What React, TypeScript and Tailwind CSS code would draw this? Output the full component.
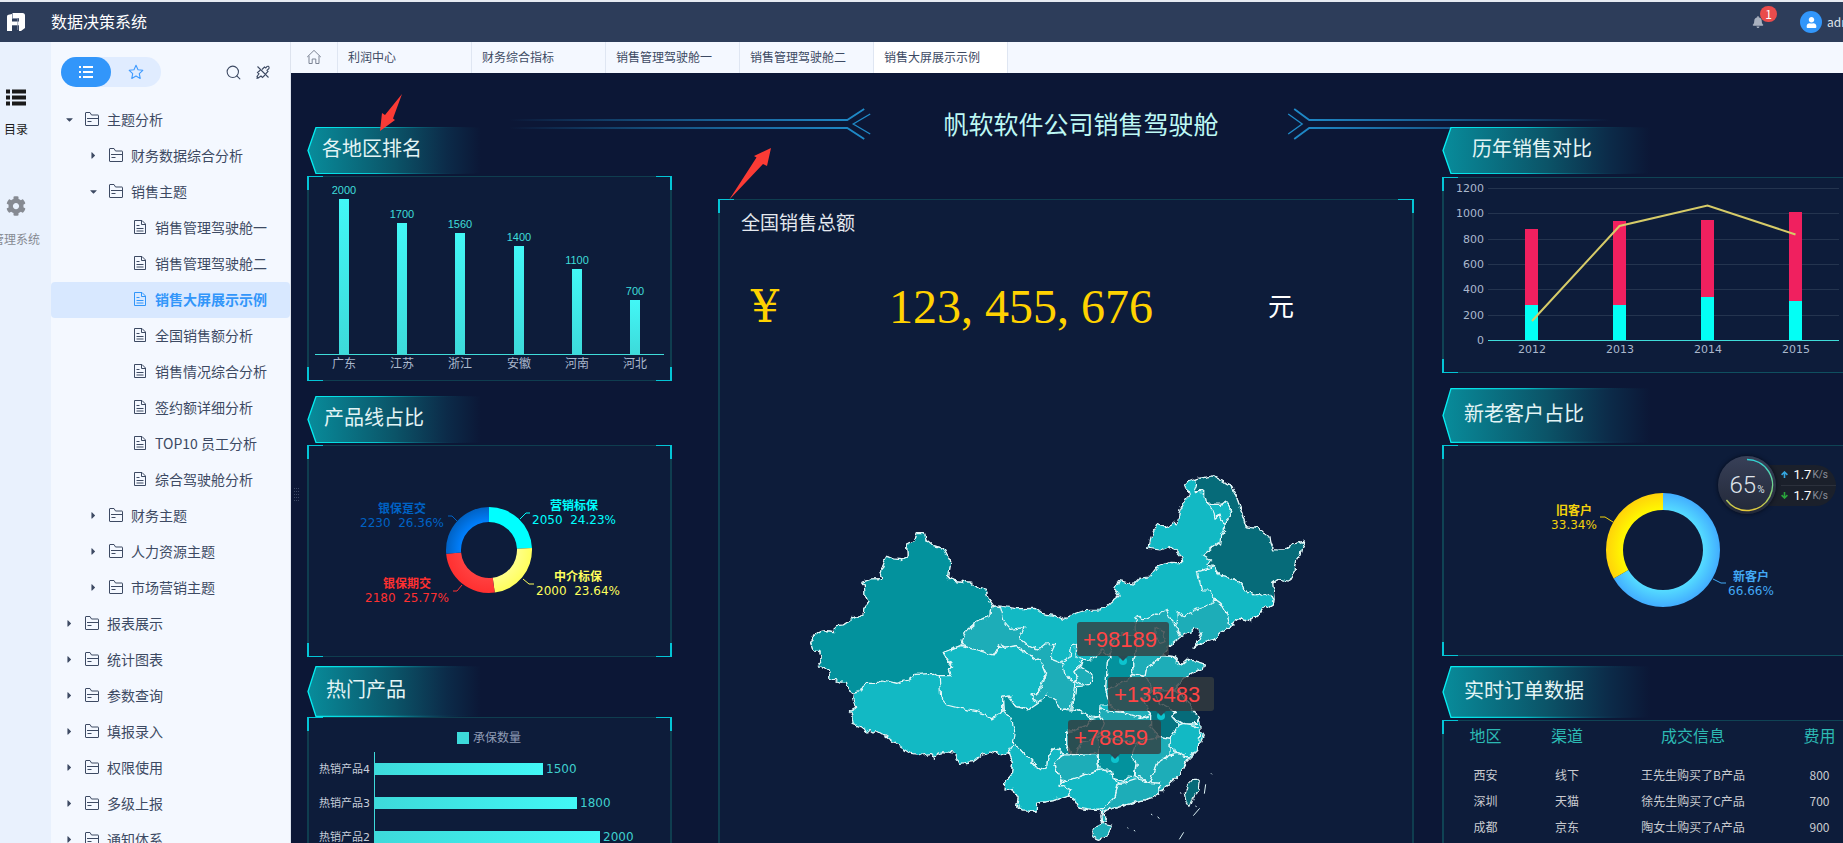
import type { ReactNode } from "react";
import { Search } from "lucide-react";
import { FaBell, FaCaretDown, FaCaretRight, FaCog, FaUser } from "react-icons/fa";

type TreeItem = {
  label: string;
  level: 0 | 1 | 2;
  open?: boolean;
  active?: boolean;
};

const tree: TreeItem[] = [
  { label: "主题分析", level: 0, open: true },
  { label: "财务数据综合分析", level: 1 },
  { label: "销售主题", level: 1, open: true },
  { label: "销售管理驾驶舱一", level: 2 },
  { label: "销售管理驾驶舱二", level: 2 },
  { label: "销售大屏展示示例", level: 2, active: true },
  { label: "全国销售额分析", level: 2 },
  { label: "销售情况综合分析", level: 2 },
  { label: "签约额详细分析", level: 2 },
  { label: "TOP10 员工分析", level: 2 },
  { label: "综合驾驶舱分析", level: 2 },
  { label: "财务主题", level: 1 },
  { label: "人力资源主题", level: 1 },
  { label: "市场营销主题", level: 1 },
  { label: "报表展示", level: 0 },
  { label: "统计图表", level: 0 },
  { label: "参数查询", level: 0 },
  { label: "填报录入", level: 0 },
  { label: "权限使用", level: 0 },
  { label: "多级上报", level: 0 },
  { label: "通知体系", level: 0 },
];

const tabs = ["利润中心", "财务综合指标", "销售管理驾驶舱一", "销售管理驾驶舱二", "销售大屏展示示例"];

const orders = [
  ["西安", "线下", "王先生购买了B产品", "800"],
  ["深圳", "天猫", "徐先生购买了C产品", "700"],
  ["成都", "京东", "陶女士购买了A产品", "900"],
];

const levelPadding = {
  0: "pl-[11px]",
  1: "pl-[35px]",
  2: "pl-[60px]",
};

/* ---------- icons ---------- */

function FolderIcon() {
  return (
    <svg width="16" height="16" viewBox="0 0 16 16" fill="none" stroke="currentColor" strokeWidth="1">
      <path d="M1.500 14V2a.5.5 0 0 1 .5-.5h4l1.500 2.500H14a.5.500 0 0 1 .5.500V14a.5.500 0 0 1-.5.500H2a.5.500 0 0 1-.5-.500" />
      <path d="M3 7.500h11.500M3.500 10.500h4" />
    </svg>
  );
}

function FileIcon() {
  return (
    <svg width="14" height="16" viewBox="0 0 14 16" fill="none" stroke="currentColor" strokeWidth="1">
      <path d="M1.500 1.500h7.500l3.500 3.500v9.500h-11zM8.500 1.500v4h4" />
      <path d="M3.500 6.500h3M3.500 9.500h7M3.500 12h7" />
    </svg>
  );
}

function HomeIcon() {
  return (
    <svg width="16" height="16" viewBox="0 0 16 16" fill="none" stroke="currentColor" strokeWidth="1">
      <path d="M1.200 8 8 1.400 14.800 8M3 6.800v7.700h3.200V10h3.600v4.500H13V6.800" />
    </svg>
  );
}

function UnpinIcon() {
  return (
    <svg width="16" height="16" viewBox="0 0 16 16" fill="none" stroke="currentColor" strokeWidth="1.100">
      <path d="M2.500 2.500 13.500 13.500" />
      <path d="M7 5.500 9.500 3l1.300 1 1.200-1.500q1.500-.8 2 .5.500 1.200-.5 2L12 6.300l1 1.200L10.500 10" />
      <path d="M5.500 6 2.500 8.500l1.500 1.300L2 12.500 3.200 14l2.800-2 1.500 1.500L10 11M1.500 14.500 3.200 13" />
    </svg>
  );
}

function ListIcon({ bold = false }: { bold?: boolean }) {
  if (bold) {
    return (
      <svg width="20" height="17" viewBox="0 0 20 17" fill="currentColor">
        <path d="M0 .5h4v4H0zM6 .5h14v4H6zM0 6.500h4v4H0zM6 6.500h14v4H6zM0 12.500h4v4H0zM6 12.500h14v4H6z" />
      </svg>
    );
  }
  return (
    <svg width="16" height="14" viewBox="0 0 16 14" fill="currentColor">
      <path d="M1 1h2v2H1zM5 1h10v2H5zM1 6h2v2H1zM5 6h10v2H5zM1 11h2v2H1zM5 11h10v2H5z" />
    </svg>
  );
}

function StarIcon() {
  return (
    <svg width="16" height="16" viewBox="0 0 16 16" fill="none" stroke="currentColor" strokeWidth="1.100" strokeLinejoin="round">
      <path d="M8 1.300 10 5.700l4.800.6-3.500 3.300.9 4.800L8 12.100l-4.200 2.300.9-4.800L1.200 6.300 6 5.700z" />
    </svg>
  );
}

function Logo() {
  return (
    <svg width="18" height="18" viewBox="0 0 18 18">
      <path d="M0 3.500Q0 2 1.500 1.700L5 1V18H0z" fill="#fff" />
      <path d="M5.500 0H15.500Q18 0 18 2.500V15l-4 3h-2V5.200H5.500z" fill="#fff" />
      <path d="M4 8.500h8.500v3.800H4z" fill="#fff" />
      <path d="M5.500 1v4.500h5.200V17" fill="none" stroke="#8b97ab" strokeWidth="0.800" />
    </svg>
  );
}

/* ---------- frame pieces ---------- */

function TopBar() {
  return (
    <header className="flex h-[42px] shrink-0 items-center border-t-2 border-[#e6ebf2] bg-[#2d3d5a] pl-[7px] text-white">
      <Logo />
      <h1 className="ml-[26px] pb-[2px] text-base">数据决策系统</h1>
      <div className="ml-auto flex w-[91px] shrink-0 items-center overflow-visible whitespace-nowrap">
        <button type="button" aria-label="消息" className="relative text-[#a9b1bf]">
          <FaBell size={12} />
          <span className="absolute -top-[10px] left-2 flex h-4 w-[17px] items-center justify-center rounded-full bg-[#ea4c4c] text-xs text-white">
            1
          </span>
        </button>
        <span className="ml-9 flex h-[22px] w-[22px] shrink-0 items-center justify-center rounded-full bg-[#3296fa]">
          <FaUser size={11} />
        </span>
        <span className="ml-[5px] text-xs text-[#dfe4ec]">admin</span>
      </div>
    </header>
  );
}

function Rail() {
  return (
    <nav className="w-[51px] shrink-0 bg-[#e9f1fd]">
      <div className="flex w-8 flex-col items-center whitespace-nowrap text-xs">
        <a href="#catalog" className="mt-[47px] flex flex-col items-center gap-[15px] text-[#1a1a1a]">
          <ListIcon bold />
          目录
        </a>
        <a href="#system" className="mt-[59px] flex w-8 flex-col items-center gap-[15px] text-[#868a92]">
          <FaCog size={20} />
          <span>管理系统</span>
        </a>
      </div>
    </nav>
  );
}

function TreeRow({ item }: { item: TreeItem }) {
  return (
    <li>
      <a
        href="#entry"
        className={`flex h-9 items-center rounded-sm pb-[2px] text-sm ${levelPadding[item.level]} ${
          item.active ? "bg-[#d8e8ff] font-bold text-[#3296fa]" : "text-[#3d4a63]"
        }`}
      >
        {item.level < 2 ? (
          <span className="flex w-[22px] items-center pl-[2px] text-[11px]">
            {item.open ? <FaCaretDown /> : <FaCaretRight />}
          </span>
        ) : (
          <span className="w-[22px]" />
        )}
        {item.level < 2 ? <FolderIcon /> : <FileIcon />}
        <span className={item.level < 2 ? "ml-[7px]" : "ml-2"}>{item.label}</span>
      </a>
    </li>
  );
}

function Sidebar() {
  return (
    <aside className="w-60 shrink-0 overflow-hidden border-r border-[#dde3ee] bg-[#f4f8ff]">
      <div className="flex h-[60px] items-center pl-[10px] pr-[19px]">
        <div className="flex h-[30px] w-[100px] rounded-full bg-[#e0ecff]">
          <button type="button" aria-label="目录" className="flex w-[50px] items-center justify-center rounded-full bg-[#3296fa] text-white">
            <ListIcon />
          </button>
          <button type="button" aria-label="收藏" className="flex w-[50px] items-center justify-center text-[#3f9bff]">
            <StarIcon />
          </button>
        </div>
        <button type="button" aria-label="搜索" className="ml-auto text-[#3d4a63]">
          <Search size={17} strokeWidth={1.500} />
        </button>
        <button type="button" aria-label="取消固定" className="ml-[13px] text-[#3d4a63]">
          <UnpinIcon />
        </button>
      </div>
      <ul>
        {tree.map((item) => (
          <TreeRow key={item.label} item={item} />
        ))}
      </ul>
    </aside>
  );
}

function TabBar() {
  return (
    <nav className="flex h-[31px] shrink-0 bg-[#f4f8ff] text-xs text-[#3d4a63]">
      <a href="#home" aria-label="首页" className="flex w-[47px] items-center justify-center border-r border-[#dfe6f2] pb-px text-[#7c8494]">
        <HomeIcon />
      </a>
      {tabs.map((tab, index) => (
        <a
          key={tab}
          href="#tab"
          className={`flex w-[134px] items-center whitespace-nowrap border-r border-[#dfe6f2] pb-[2px] pl-[10px] ${
            index === tabs.length - 1 ? "bg-white" : ""
          }`}
        >
          {tab}
        </a>
      ))}
    </nav>
  );
}

type BannerProps = { id: string; className: string; wide?: boolean; children: ReactNode };

function Banner({ id, className, wide = false, children }: BannerProps) {
  const width = wide ? 208 : 174;
  return (
    <div className={`relative flex shrink-0 items-center ${className}`}>
      <svg className="absolute inset-0 h-full" width={width} viewBox={`0 0 ${width} 50`} preserveAspectRatio="none">
        <defs>
          <linearGradient id={`${id}-fill`}>
            <stop offset="0" stopColor="#088c9b" />
            <stop offset="0.5" stopColor="#0b5468" />
            <stop offset="0.8" stopColor="#0c2b49" />
            <stop offset="1" stopColor="#0c1736" />
          </linearGradient>
          <linearGradient id={`${id}-line`} gradientUnits="userSpaceOnUse" x1="0" x2={width}>
            <stop offset="0" stopColor="#05f0f5" />
            <stop offset="0.4" stopColor="#06c3cc" />
            <stop offset="1" stopColor="#0c1736" stopOpacity="0" />
          </linearGradient>
        </defs>
        <path d={`M1 25 9 .5H${width}V49.500H9Z`} fill={`url(#${id}-fill)`} />
        <path
          d={`M${width} .5H9L1 25 9 49.500H${width}`}
          fill="none"
          stroke={`url(#${id}-line)`}
          strokeWidth="1.300"
        />
      </svg>
      <h2 className="relative pb-[5px] text-xl leading-6 text-[#e3f4f5]">{children}</h2>
    </div>
  );
}

type PanelProps = { className?: string; open?: boolean; children: ReactNode };

/* `open` panels run off the right edge, so they have no right-hand side */
function Panel({ className = "", open = false, children }: PanelProps) {
  const edge = open
    ? "shadow-[inset_2px_1px_0_#0f4354,inset_0_-1px_0_#0f4f5f]"
    : "shadow-[inset_2px_1px_0_#0f3d4f,inset_-2px_-1px_0_#0f3d4f]";
  return (
    <div className={`relative overflow-hidden bg-[#0d1c3a] ${edge} ${className}`}>
      {children}
      <span className="absolute left-0 top-0 h-[14px] w-4 border-l-2 border-t border-[#04c5d6]" />
      <span className="absolute bottom-0 left-0 h-[14px] w-4 border-b border-l-2 border-[#04c5d6]" />
      {!open && (
        <>
          <span className="absolute right-0 top-0 h-[14px] w-4 border-r-2 border-t border-[#04c5d6]" />
          <span className="absolute bottom-0 right-0 h-[14px] w-4 border-b border-r-2 border-[#04c5d6]" />
        </>
      )}
    </div>
  );
}

/* ---------- charts ---------- */

const chartFont = "[font-family:'DejaVu_Sans','Noto_Sans_CJK_SC',sans-serif]";

function RegionChart() {
  const bars = [
    { name: "广东", value: 2000, x: 37, top: 23 },
    { name: "江苏", value: 1700, x: 95, top: 47 },
    { name: "浙江", value: 1560, x: 153, top: 57 },
    { name: "安徽", value: 1400, x: 212, top: 70 },
    { name: "河南", value: 1100, x: 270, top: 93 },
    { name: "河北", value: 700, x: 328, top: 124 },
  ];
  return (
    <svg className="block w-full" viewBox="0 0 365 205" textAnchor="middle">
      <defs>
        <linearGradient id="bar-v" x1="0" x2="0" y1="0" y2="1">
          <stop offset="0" stopColor="#42f7f6" />
          <stop offset="1" stopColor="#3ddada" />
        </linearGradient>
      </defs>
      {bars.map((bar) => (
        <g key={bar.name}>
          <rect x={bar.x - 5} y={bar.top} width="10" height={178 - bar.top} fill="url(#bar-v)" />
          <text x={bar.x} y={bar.top - 5} fontSize="11" fill="#3fdcd9" fontFamily="Liberation Sans">
            {bar.value}
          </text>
          <text x={bar.x} y="192" fontSize="12" fill="#aab8cd">
            {bar.name}
          </text>
        </g>
      ))}
      <path d="M8 178.500H357" stroke="#3fdcd9" />
    </svg>
  );
}

function slice(cx: number, cy: number, outer: number, inner: number, from: number, to: number) {
  const at = (r: number, t: number) => {
    const a = t * 2 * Math.PI;
    return `${(cx + r * Math.sin(a)).toFixed(2)} ${(cy - r * Math.cos(a)).toFixed(2)}`;
  };
  const large = to - from > 0.5 ? 1 : 0;
  return `M${at(outer, from)}A${outer} ${outer} 0 ${large} 1 ${at(outer, to)}L${at(inner, to)}A${inner} ${inner} 0 ${large} 0 ${at(inner, from)}Z`;
}

function ProductLineChart() {
  const parts = [
    { name: "营销标保", value: "2050\u00a0\u00a024.23%", color: "#00ffff", inner: "#00ffff", from: 0, to: 0.2423, x: 267, y: 65, lead: "M213 74l6-6h4" },
    { name: "中介标保", value: "2000\u00a0\u00a023.64%", color: "#ffff5c", inner: "#ffff8a", from: 0.2423, to: 0.4787, x: 271, y: 136, lead: "M216 134l6 5h5" },
    { name: "银保期交", value: "2180\u00a0\u00a025.77%", color: "#ff3030", inner: "#ff4040", from: 0.4787, to: 0.7364, x: 100, y: 143, lead: "M155 140l-5 6h-4" },
    { name: "银保趸交", value: "2230\u00a0\u00a026.36%", color: "#0062c4", inner: "#0080ff", from: 0.7364, to: 1, x: 95, y: 68, lead: "M150 76l-5-5h-4" },
  ];
  return (
    <svg className={`block w-full ${chartFont}`} viewBox="0 0 365 212" textAnchor="middle" fontSize="12">
      {parts.map((part, i) => (
        <g key={part.name} fill={part.color}>
          <radialGradient id={`line-${i}`} gradientUnits="userSpaceOnUse" cx="182" cy="105" r="43">
            <stop offset="0.650" stopColor={part.inner} />
            <stop offset="1" stopColor={part.color} />
          </radialGradient>
          <path d={slice(182, 105, 43, 28, part.from, part.to)} fill={`url(#line-${i})`} />
          <path d={part.lead} fill="none" stroke={part.color} />
          <text x={part.x} y={part.y} fontWeight="bold">
            {part.name}
          </text>
          <text x={part.x} y={part.y + 14}>
            {part.value}
          </text>
        </g>
      ))}
    </svg>
  );
}

function HotProductChart() {
  const bars = [
    { name: "热销产品4", value: 1500, y: 46, width: 168 },
    { name: "热销产品3", value: 1800, y: 80, width: 202 },
    { name: "热销产品2", value: 2000, y: 114, width: 225 },
  ];
  return (
    <svg className={`block w-full ${chartFont}`} viewBox="0 0 365 160" fontSize="12">
      <defs>
        <linearGradient id="bar-h">
          <stop offset="0" stopColor="#3ddada" />
          <stop offset="1" stopColor="#42f7f6" />
        </linearGradient>
      </defs>
      <rect x="150" y="15" width="12" height="12" fill="#3ddada" />
      <text x="166" y="25" fill="#8f9bb5">
        承保数量
      </text>
      {bars.map((bar) => (
        <g key={bar.name}>
          <text x="63" y={bar.y + 10} textAnchor="end" fontSize="11" fill="#c6cedb">
            {bar.name}
          </text>
          <rect x="68" y={bar.y} width={bar.width} height="12" fill="url(#bar-h)" />
          <text x={bar.width + 71} y={bar.y + 10} fill="#3fcfce">
            {bar.value}
          </text>
        </g>
      ))}
      <path d="M67.500 35V160" stroke="#3ddada" />
    </svg>
  );
}

function YearChart() {
  const years = [
    { year: 2012, x: 90, top: 52, split: 128 },
    { year: 2013, x: 178, top: 44, split: 128 },
    { year: 2014, x: 266, top: 43, split: 120 },
    { year: 2015, x: 354, top: 35, split: 124 },
  ];
  const ticks = [1200, 1000, 800, 600, 400, 200, 0];
  return (
    <svg className={`block w-full ${chartFont}`} viewBox="0 0 401 196" fontSize="11" fill="#aab8cd">
      {ticks.map((tick) => {
        const y = 163.5 - Math.round((tick / 1200) * 152);
        return (
          <g key={tick}>
            <text x="42" y={y + 3.5} textAnchor="end">
              {tick}
            </text>
            <path d={`M46 ${y}H397`} stroke={tick === 0 ? "#3fdcd9" : "#24344f"} />
          </g>
        );
      })}
      {years.map((item) => (
        <g key={item.year}>
          <rect x={item.x - 7} y={item.top} width="13" height={item.split - item.top} fill="#f0205f" />
          <rect x={item.x - 7} y={item.split} width="13" height={163 - item.split} fill="#03fff5" />
          <text x={item.x} y="176" textAnchor="middle">
            {item.year}
          </text>
        </g>
      ))}
      <path d="M90 144 177.500 49 265.500 28.500 353.500 57.500" fill="none" stroke="#d6cb68" strokeWidth="2" />
    </svg>
  );
}

function CustomerChart() {
  return (
    <svg className={`block w-full ${chartFont}`} viewBox="0 0 401 211" textAnchor="middle" fontSize="12">
      <defs>
        <radialGradient id="new-customer" gradientUnits="userSpaceOnUse" cx="221" cy="105" r="57">
          <stop offset="0.700" stopColor="#55dcff" />
          <stop offset="1" stopColor="#42adff" />
        </radialGradient>
        <radialGradient id="old-customer" gradientUnits="userSpaceOnUse" cx="221" cy="105" r="57">
          <stop offset="0.700" stopColor="#fff900" />
          <stop offset="1" stopColor="#ffd20a" />
        </radialGradient>
      </defs>
      <path d={slice(221, 105, 57, 40, 0, 0.6666)} fill="url(#new-customer)" />
      <path d={slice(221, 105, 57, 40, 0.6666, 1)} fill="url(#old-customer)" />
      <g fill="#f2d20c">
        <path d="M171 77l-8-5h-5" fill="none" stroke="#f2d20c" />
        <text x="132" y="70" fontWeight="bold">旧客户</text>
        <text x="132" y="84">33.34%</text>
      </g>
      <g fill="#43a9f5">
        <path d="M271 134l8 4h5" fill="none" stroke="#43a9f5" />
        <text x="309" y="136" fontWeight="bold">新客户</text>
        <text x="309" y="150">66.66%</text>
      </g>
    </svg>
  );
}

function OrderTable() {
  return (
    <table className="w-[416px] table-fixed text-center text-xs text-[#c9cbd0]">
      <colgroup>
        <col className="w-[87px]" />
        <col className="w-[76px]" />
        <col className="w-[176px]" />
        <col className="w-[77px]" />
      </colgroup>
      <thead>
        <tr className="h-[30px] text-base text-[#2cb9b3]">
          <th className="font-normal">地区</th>
          <th className="font-normal">渠道</th>
          <th className="font-normal">成交信息</th>
          <th className="font-normal">费用</th>
        </tr>
        <tr className="h-3" />
      </thead>
      <tbody>
        {orders.map((row) => (
          <tr key={row[0]} className="h-[26px]">
            {row.map((cell) => (
              <td key={cell}>{cell}</td>
            ))}
          </tr>
        ))}
      </tbody>
    </table>
  );
}

/* ---------- map ---------- */

const mainland =
  "M32 545 40 530 62 515 80 512 100 515 110 497 130 495 160 475 190 462 192 445 205 425 195 405 193 375 186 367 215 357 247 356 240 340 250 315 260 289 280 297 305 299 322 290 320 252 345 240 352 218 373 218 378 238 400 257 430 265 443 290 452 305 445 355 460 361 512 367 535 385 558 392 565 415 581 438 601 438 650 446 705 445 725 460 765 467 790 478 820 462 850 452 900 450 920 440 935 425 958 408 945 385 955 362 970 365 1000 373 1020 352 1050 348 1070 322 1110 307 1148 308 1145 290 1125 268 1105 260 1080 270 1046 265 1055 225 1070 193 1095 203 1120 193 1133 183 1140 150 1155 120 1168 105 1165 90 1152 80 1165 65 1190 56 1240 48 1270 65 1290 72 1305 100 1320 140 1333 185 1338 200 1370 205 1390 215 1405 230 1410 250 1418 270 1450 270 1480 252 1515 244 1505 262 1500 285 1490 300 1485 330 1465 363 1435 357 1418 370 1422 415 1420 435 1405 445 1395 438 1380 460 1350 485 1320 475 1305 485 1290 502 1260 520 1245 535 1210 545 1182 565 1195 545 1205 520 1190 502 1170 515 1140 530 1125 545 1100 565 1085 580 1100 587 1122 590 1130 605 1145 615 1165 597 1190 605 1213 612 1210 625 1180 635 1150 660 1130 680 1150 710 1170 740 1190 765 1200 785 1200 810 1210 825 1195 860 1190 875 1160 905 1140 945 1110 970 1080 998 1060 1012 1010 1025 960 1040 920 1050 908 1060 922 1082 905 1085 903 1065 905 1052 870 1050 840 1045 825 1020 805 1005 760 1022 710 1030 708 1060 690 1050 670 1050 650 1035 655 1015 640 985 612 990 615 965 635 940 638 910 625 878 605 885 570 873 545 885 520 905 480 910 465 880 430 875 410 880 403 898 395 880 370 885 330 880 300 860 260 830 230 812 215 822 190 805 160 793 155 765 148 755 167 745 158 715 160 700 145 690 140 668 115 665 90 655 85 630 65 618 52 618 65 600 60 575 40 572Z";

const bright = "#12b9c4";
const soft = "#1dadb8";
const deep = "#03929d";
const dark = "#066b79";

const westProvinces = [
  { name: "xinjiang", fill: deep, d: "M32 545 40 530 62 515 80 512 100 515 110 497 130 495 160 475 190 462 192 445 205 425 195 405 193 375 186 367 215 357 247 356 240 340 250 315 260 289 280 297 305 299 322 290 320 252 345 240 352 218 373 218 378 238 400 257 430 265 443 290 452 305 445 355 460 361 512 367 535 385 558 392 565 415 581 438 575 445 573 468 550 475 525 490 498 512 485 557 430 578 443 600 458 618 445 630 453 650 418 650 400 640 350 643 325 660 290 670 250 660 235 670 195 670 180 695 160 700 145 690 140 668 115 665 90 655 85 630 65 618 52 618 65 600 60 575 40 572Z" },
  { name: "gansu", fill: soft, d: "M581 438 601 440 615 490 630 508 672 503 660 535 690 560 712 570 735 552 767 550 755 575 755 598 780 608 795 625 805 655 825 670 820 700 825 712 808 745 785 748 768 720 738 703 715 730 690 703 718 700 738 645 720 602 680 580 650 560 615 565 598 555 580 585 530 570 485 557 498 512 525 490 550 475 573 468 575 445Z" },
  { name: "qinghai", fill: bright, d: "M485 557 530 570 580 585 598 555 615 565 650 560 680 580 720 602 738 645 720 675 718 700 690 703 710 735 685 750 650 740 625 708 608 712 608 752 605 760 575 777 555 762 530 755 480 745 440 735 422 712 418 650 453 650 445 630 458 618 443 600 430 578Z" },
  { name: "sichuan", fill: deep, d: "M610 752 608 712 625 708 650 740 685 750 715 730 738 703 768 720 785 748 815 750 845 755 875 775 860 800 800 815 800 850 810 885 790 885 780 870 760 865 745 890 740 920 718 932 690 900 660 865 640 855 645 820 635 780Z" },
  { name: "yunnan", fill: bright, d: "M640 855 660 865 690 900 718 932 740 920 745 890 760 865 780 870 790 885 762 905 770 930 785 960 780 975 815 990 805 1005 760 1022 710 1030 708 1060 690 1050 670 1050 650 1035 655 1015 640 985 612 990 615 965 635 940 638 910 625 878Z" },
  { name: "guizhou", fill: soft, d: "M762 905 790 885 810 885 890 880 897 928 840 950 812 968 785 960 770 930Z" },
];

const eastProvinces = [
  { name: "heilongjiang", fill: dark, d: "M410 56 460 48 490 65 510 72 525 100 540 140 553 185 558 200 590 205 610 215 627 230 630 250 638 270 670 270 700 252 735 244 725 262 720 285 710 300 705 330 685 363 655 357 638 370 642 418 615 402 590 410 570 390 562 400 545 375 520 355 478 345 463 320 445 315 455 300 430 285 475 248 482 255 485 225 497 205 495 192 517 150 497 125 485 133 440 133 435 105 425 95 405 95 413 72Z" },
  { name: "jilin", fill: bright, d: "M412 335 445 325 463 320 478 345 520 355 545 375 562 400 570 390 590 410 615 402 642 418 640 435 625 445 615 438 600 460 567 485 540 475 525 485 510 502 500 460 485 435 462 418 448 390 425 390Z" },
  { name: "liaoning", fill: soft, d: "M350 500 355 455 370 470 410 448 455 432 462 418 485 435 500 460 510 502 480 520 465 535 430 545 402 565 415 545 425 520 405 502 390 515 365 530Z" },
  { name: "hebei", fill: soft, d: "M225 490 232 465 250 480 295 460 320 448 330 480 350 500 365 528 345 545 320 565 305 587 290 600 260 625 255 650 218 640 218 600 228 580Z" },
  { name: "ningxia", fill: bright, d: "M5 605 30 590 35 560 50 550 48 590 68 600 45 635 52 655 40 668 28 660 15 640Z" },
  { name: "longdong", fill: soft, d: "M60 622 92 640 98 665 75 678 45 665 52 655 45 635Z" },
  { name: "shaanxi", fill: deep, d: "M68 598 95 600 110 588 125 570 150 590 142 610 140 650 137 690 150 735 120 735 118 770 95 768 65 755 35 748 48 700 50 680 75 678 98 665 92 640 60 622Z" },
  { name: "shanxi", fill: deep, d: "M150 590 160 540 190 520 225 530 228 580 218 600 218 640 200 662 137 690 142 610Z" },
  { name: "shandong", fill: soft, d: "M255 650 260 625 290 600 305 587 342 590 350 605 365 615 385 597 410 605 433 612 430 625 400 635 370 660 340 690 280 690Z" },
  { name: "henan", fill: soft, d: "M137 690 200 662 218 640 255 650 280 690 250 720 272 765 245 775 180 760 150 735Z" },
  { name: "jiangsu", fill: dark, d: "M280 690 340 690 370 710 390 740 417 775 410 790 370 793 335 770 300 730Z" },
  { name: "anhui", fill: "#047582", d: "M272 765 250 720 280 690 300 730 345 755 335 770 358 795 330 835 300 830 270 800Z" },
  { name: "hubei", fill: soft, d: "M118 770 120 750 190 758 245 775 272 765 272 800 300 830 230 850 115 830Z" },
  { name: "chongqing", fill: deep, d: "M20 820 80 800 95 775 118 770 130 790 115 830 60 850 50 880 30 880 20 850Z" },
  { name: "zhejiang", fill: bright, d: "M358 795 370 790 400 795 420 815 415 860 410 872 385 893 355 880 330 860 330 835Z" },
  { name: "jiangxi", fill: soft, d: "M230 850 300 830 330 835 330 885 290 910 275 950 270 970 240 950 225 950 228 910 215 890Z" },
  { name: "hunan", fill: deep, d: "M115 830 230 850 215 890 228 910 222 950 205 948 190 965 160 955 150 930 125 930 115 910Z" },
  { name: "fujian", fill: soft, d: "M275 950 290 910 330 885 355 880 385 893 360 945 330 970 300 998 298 970 270 968Z" },
  { name: "guangdong", fill: soft, d: "M175 970 190 968 230 955 270 968 298 970 300 998 280 1012 230 1025 180 1040 140 1050 128 1060 142 1082 125 1085 123 1065 130 1045 165 1010Z" },
  { name: "guangxi", fill: bright, d: "M5 968 60 950 120 930 155 935 160 955 175 970 165 1010 130 1045 90 1050 60 1045 45 1020 25 1005 35 990 0 975Z" },
  { name: "hainan", fill: soft, d: "M95 1110 110 1100 130 1090 155 1095 150 1110 140 1130 115 1138 97 1130Z" },
  { name: "taiwan", fill: dark, d: "M400 955 410 955 418 962 415 985 400 1015 390 1042 378 1025 373 1000 385 975Z" },
];

const callouts = [
  { text: "+98189", x: 1077, y: 622, width: 92, tip: 1123 },
  { text: "+135483", x: 1108, y: 677, width: 106, tip: 1161 },
  { text: "+78859", x: 1068, y: 720, width: 93, tip: 1115 },
];

function ChinaMap() {
  return (
    <svg className="block w-full" viewBox="718 339 696 504">
      <defs>
        <filter id="rough" x="-2%" y="-2%" width="104%" height="104%" colorInterpolationFilters="sRGB">
          <feTurbulence type="fractalNoise" baseFrequency="0.160" numOctaves="2" seed="4" />
          <feDisplacementMap in="SourceGraphic" scale="6" xChannelSelector="R" yChannelSelector="G" />
        </filter>
      </defs>
      <g filter="url(#rough)" stroke="#e6f8f9" strokeWidth="3.600" strokeLinejoin="round">
        <g transform="translate(800 460) scale(.33333)">
          <path d={mainland} fill={bright} />
          {westProvinces.map((p) => (
            <path key={p.name} d={p.d} fill={p.fill} />
          ))}
        </g>
        <g transform="translate(1060 460) scale(.33333)">
          {eastProvinces.map((p) => (
            <path key={p.name} d={p.d} fill={p.fill} />
          ))}
          <path d="M440 133 460 150 465 175 477 165 487 190 495 192 517 150 497 125 485 133Z" fill={bright} />
          <path d="M285 500 310 515 318 545 300 550 285 530Z" fill={bright} />
        </g>
      </g>
      <g transform="translate(1060 460) scale(.33333)" stroke="#dff5f6" strokeWidth="3">
        <path d="M437 973 433 1001M419 1045 400 1067M371 1117 358 1138M453 940l3 3M273 1062l4 3M293 1070l5 6M202 1103l3 2M222 1110l3 4M360 998l4 2M406 1038l4 2" />
      </g>
      {callouts.map((c) => (
        <g key={c.text}>
          <circle cx={c.tip} cy={c.y + 39} r="4" fill="#0cc4cf" />
          <path d={`M${c.tip - 5} ${c.y + 34}h10l-5 5z`} fill="#2b4a54" />
          <rect x={c.x} y={c.y} width={c.width} height="34" rx="3" fill="#343d40" fillOpacity="0.800" />
          <text x={c.x + 6} y={c.y + 25} fontSize="22" fill="#ff4545" fontFamily="Liberation Sans">
            {c.text}
          </text>
        </g>
      ))}
    </svg>
  );
}

/* ---------- floating pieces ---------- */

function SpeedMeter() {
  return (
    <div className="absolute right-[7px] top-[11px] flex items-center [font-family:Roboto,sans-serif]">
      <div className="relative z-10 flex h-[58px] w-[58px] items-center justify-center rounded-full bg-gradient-to-b from-[#384058] to-[#222838] shadow-[0_0_4px_#050a18]">
        <svg className="absolute inset-0" width="58" height="58" viewBox="0 0 58 58">
          <defs>
            <linearGradient id="meter" x1="0" x2="0" y1="0" y2="1">
              <stop offset="0" stopColor="#2fd3d8" />
              <stop offset="0.600" stopColor="#7fd27f" />
              <stop offset="1" stopColor="#e5c93a" />
            </linearGradient>
          </defs>
          <path d="M29 3.500A25.500 25.500 0 1 1 8.400 44" fill="none" stroke="url(#meter)" strokeWidth="1.500" />
        </svg>
        <span className="relative text-2xl font-light text-[#dfe3ea]">65</span>
        <span className="relative pl-px pt-2 text-[10px] text-[#dfe3ea]">%</span>
      </div>
      <div className="-ml-5 flex w-20 flex-col rounded-r-full bg-[#1b202b] pl-[25px] text-[13px] leading-5 text-white">
        <p className="flex items-center border-b border-[#2c313c]">
          <SpeedArrow up />
          <span className="ml-auto">1.7</span>
          <span className="mr-2 pl-px text-[10px] text-[#8b909b]">K/s</span>
        </p>
        <p className="flex items-center">
          <SpeedArrow />
          <span className="ml-auto">1.7</span>
          <span className="mr-2 pl-px text-[10px] text-[#8b909b]">K/s</span>
        </p>
      </div>
    </div>
  );
}

function SpeedArrow({ up = false }: { up?: boolean }) {
  return (
    <svg width="7" height="7" viewBox="0 0 7 7" fill="none" stroke={up ? "#35a6e0" : "#2aa53b"} strokeWidth="1.600">
      <path d={up ? "M3.500 7V1.200M.6 3.800 3.500 1l2.900 2.800" : "M3.500 0v5.800M.6 3.200 3.500 6l2.900-2.800"} />
    </svg>
  );
}

function TitleLines() {
  return (
    <svg className="absolute left-[-30%] top-[35px] w-[164%]" viewBox="509 108 1141 32" fill="none">
      <defs>
        <linearGradient id="wing-left" gradientUnits="userSpaceOnUse" x1="509" x2="870">
          <stop offset="0" stopColor="#1b83bd" stopOpacity="0" />
          <stop offset="0.700" stopColor="#1b6da5" />
          <stop offset="1" stopColor="#1f8dcc" />
        </linearGradient>
        <linearGradient id="wing-right" gradientUnits="userSpaceOnUse" x1="1288" x2="1610">
          <stop offset="0" stopColor="#1f8dcc" />
          <stop offset="0.300" stopColor="#1b6da5" />
          <stop offset="1" stopColor="#1b83bd" stopOpacity="0" />
        </linearGradient>
      </defs>
      <g stroke="url(#wing-left)">
        <path d="M509 120H847L864 109M509 128H847L864 139" strokeWidth="1.800" />
        <path d="M870 114 853 124 870 134" strokeWidth="1.300" />
      </g>
      <g stroke="url(#wing-right)">
        <path d="M1610 120H1309L1294 109M1452 128H1309L1294 139" strokeWidth="1.800" />
        <path d="M1288 114 1302 124 1288 134" strokeWidth="1.300" />
      </g>
    </svg>
  );
}

function Pointers() {
  return (
    <svg className="pointer-events-none absolute left-0 top-0" width="500" height="140" fill="#fb3b35">
      <path d="M111 21 102 45.500 104 47 89 58 91 40 94 42Z" />
      <path d="M480 75 476 93 472 91 438 127 465.500 84.500 463 83Z" />
    </svg>
  );
}

function Dashboard() {
  return (
    <main className="relative grid min-h-0 flex-1 grid-cols-[365fr_742fr_429fr] overflow-hidden bg-[#0c1736] pl-4">
      <section className="flex min-w-0 flex-col pt-[54px]">
        <Banner id="region" className="h-[47px] pl-[15px]">各地区排名</Banner>
        <Panel className="mt-[2px]">
          <RegionChart />
        </Panel>
        <Banner id="line" className="mt-[15px] h-[47px] pl-[17px]">产品线占比</Banner>
        <Panel className="mt-[2px]">
          <ProductLineChart />
        </Panel>
        <Banner id="hot" className="mt-[9px] h-[51px] pl-[19px]">热门产品</Banner>
        <Panel className="-mb-8 flex-1">
          <HotProductChart />
        </Panel>
      </section>

      <section className="flex min-w-0 flex-col pl-[46px]">
        <div className="relative flex h-[126px] shrink-0 items-center justify-center pb-6 pl-[30px]">
          <TitleLines />
          <h2 className="relative text-[25px] text-[#bdf8f4]">帆软软件公司销售驾驶舱</h2>
        </div>
        <Panel className="-mb-8 flex-1 pt-[9px]">
          <h3 className="pl-[23px] text-[19px] leading-7 text-[#e4e8ee]">全国销售总额</h3>
          <div className="mt-[38px] grid h-[65px] grid-cols-[171fr_379fr_146fr] items-center text-[#ffd200]">
            <span className="pl-[33px] text-[44px] leading-none [font-family:'DejaVu_Serif',serif]">¥</span>
            <span className="whitespace-nowrap text-5xl leading-none [font-family:'Liberation_Serif',serif]">
              123, 455, 676
            </span>
            <span className="pb-1 text-[26px] leading-none text-white">元</span>
          </div>
          <ChinaMap />
        </Panel>
      </section>

      <section className="relative flex min-w-0 flex-col pl-7 pt-[54px]">
        <Banner id="year" wide className="h-[47px] pl-[30px]">历年销售对比</Banner>
        <Panel open className="mt-[3px]">
          <YearChart />
        </Panel>
        <Banner id="customer" wide className="mt-[15px] h-[55px] pl-[22px]">新老客户占比</Banner>
        <Panel open className="mt-[2px]">
          <CustomerChart />
          <SpeedMeter />
        </Panel>
        <Banner id="order" wide className="mt-[10px] h-[52px] pl-[22px]">实时订单数据</Banner>
        <Panel open className="-mb-8 mt-[2px] flex-1">
          <OrderTable />
        </Panel>
      </section>

      <Pointers />
      <svg className="absolute left-[3px] top-[415px]" width="6" height="13" stroke="#3a4663" strokeDasharray="1 2">
        <path d="M.5 0v13M2.500 0v13M4.500 0v13" />
      </svg>
    </main>
  );
}

export default function App() {
  return (
    <div className="flex h-screen flex-col overflow-hidden bg-[#f4f8ff] [font-family:'Noto_Sans_CJK_SC','Noto_Sans',sans-serif]">
      <TopBar />
      <div className="flex min-h-0 flex-1">
        <Rail />
        <Sidebar />
        <div className="flex min-w-0 flex-1 flex-col">
          <TabBar />
          <Dashboard />
        </div>
      </div>
    </div>
  );
}
